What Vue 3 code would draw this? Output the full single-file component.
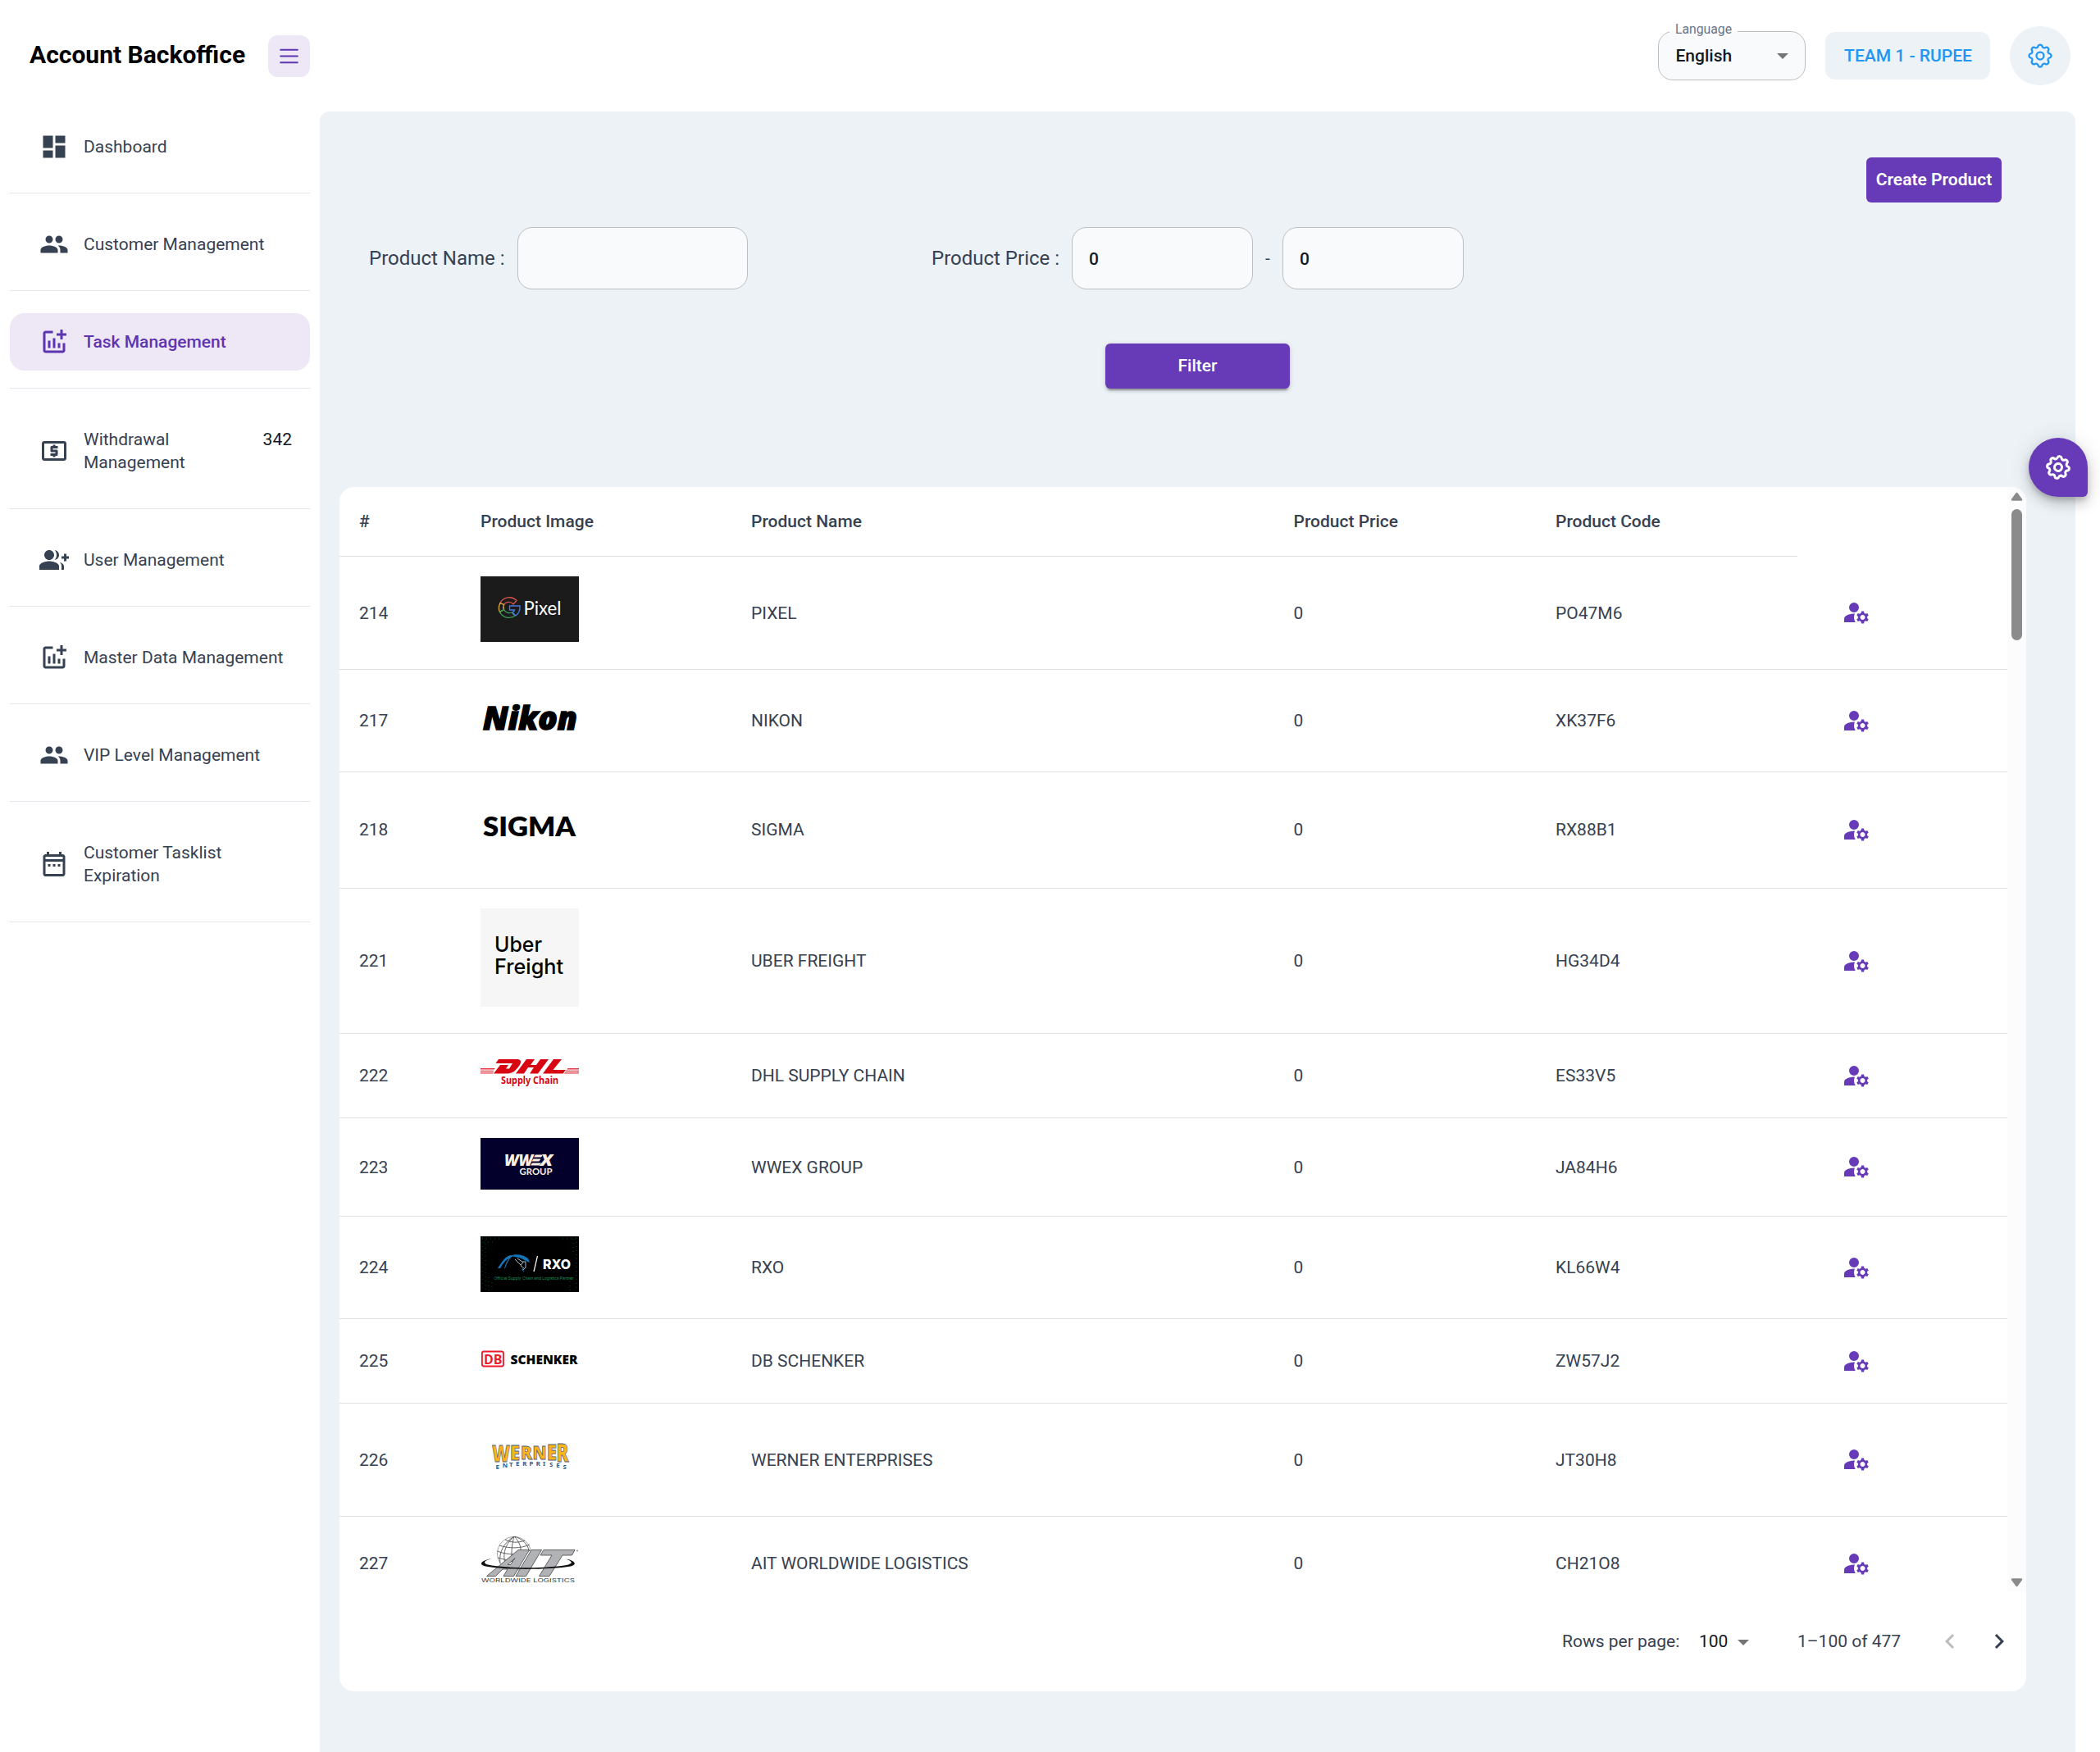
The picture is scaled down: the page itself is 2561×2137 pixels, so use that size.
<script setup>
const paths = {
  dashboard: 'M3 13h8V3H3v10zm0 8h8v-6H3v6zm10 0h8V11h-8v10zm0-18v6h8V3h-8z',
  people:
    'M16 11c1.66 0 2.99-1.34 2.99-3S17.66 5 16 5c-1.66 0-3 1.34-3 3s1.34 3 3 3zm-8 0c1.66 0 2.99-1.34 2.99-3S9.66 5 8 5C6.34 5 5 6.34 5 8s1.34 3 3 3zm0 2c-2.33 0-7 1.17-7 3.5V19h14v-2.5c0-2.33-4.67-3.5-7-3.5zm8 0c-.29 0-.62.02-.97.05 1.16.84 1.97 1.97 1.97 3.45V19h6v-2.5c0-2.33-4.67-3.5-7-3.5z',
  chart:
    'M22 5v2h-3v3h-2V7h-3V5h3V2h2v3h3zm-3 14H5V5h6V3H5c-1.1 0-2 .9-2 2v14c0 1.1.9 2 2 2h14c1.1 0 2-.9 2-2v-6h-2v6zm-4-6v4h2v-4h-2zm-4 4h2V9h-2v8zm-2 0v-6H7v6h2z',
  atm: 'M11 17h2v-1h1c.55 0 1-.45 1-1v-3c0-.55-.45-1-1-1h-3v-1h4V8h-2V7h-2v1h-1c-.55 0-1 .45-1 1v3c0 .55.45 1 1 1h3v1H9v2h2v1zm9-13H4c-1.11 0-1.99.89-1.99 2L2 18c0 1.11.89 2 2 2h16c1.11 0 2-.89 2-2V6c0-1.11-.89-2-2-2zm0 14H4V6h16v12z',
  groupAdd:
    'M22 9V7h-2v2h-2v2h2v2h2v-2h2V9zM8 12c2.21 0 4-1.79 4-4s-1.79-4-4-4-4 1.79-4 4 1.79 4 4 4zm0 1c-2.67 0-8 1.34-8 4v3h16v-3c0-2.66-5.33-4-8-4zm4.51-8.95C13.43 5.11 14 6.49 14 8s-.57 2.89-1.49 3.95C14.47 11.7 16 10.04 16 8s-1.53-3.7-3.49-3.95zm4.02 9.78C17.42 14.66 18 15.7 18 17v3h2v-3c0-1.45-1.59-2.51-3.47-3.17z',
  date: 'M19 4h-1V2h-2v2H8V2H6v2H5c-1.11 0-1.99.9-1.99 2L3 20c0 1.1.89 2 2 2h14c1.1 0 2-.9 2-2V6c0-1.1-.9-2-2-2zm0 16H5V10h14v10zm0-12H5V6h14v2zM9 14H7v-2h2v2zm4 0h-2v-2h2v2zm4 0h-2v-2h2v2z',
  manage:
    'M6 8a4 4 0 1 0 8 0a4 4 0 1 0-8 0zM10.67 13.02c-.22-.01-.44-.02-.67-.02-2.42 0-4.68.67-6.61 1.82-.88.52-1.39 1.5-1.39 2.53V20h9.26c-.79-1.13-1.26-2.51-1.26-4 0-1.07.25-2.07.67-2.98zM20.75 16c0-.22-.03-.42-.06-.63l1.14-1.01-1-1.73-1.45.49c-.32-.27-.68-.48-1.08-.63L18 11h-2l-.3 1.49c-.4.15-.76.36-1.08.63l-1.45-.49-1 1.73 1.14 1.01c-.03.21-.06.41-.06.63s.03.42.06.63l-1.14 1.01 1 1.73 1.45-.49c.32.27.68.48 1.08.63L16 21h2l.3-1.49c.4-.15.76-.36 1.08-.63l1.45.49 1-1.73-1.14-1.01c.03-.21.06-.41.06-.63zM17 18c-1.1 0-2-.9-2-2s.9-2 2-2 2 .9 2 2-.9 2-2 2z',
  gear: 'M10.325 4.317c.426-1.756 2.924-1.756 3.35 0a1.724 1.724 0 0 0 2.573 1.066c1.543-.94 3.31.826 2.37 2.37a1.724 1.724 0 0 0 1.065 2.572c1.756.426 1.756 2.924 0 3.35a1.724 1.724 0 0 0-1.066 2.573c.94 1.543-.826 3.31-2.37 2.37a1.724 1.724 0 0 0-2.572 1.065c-.426 1.756-2.924 1.756-3.35 0a1.724 1.724 0 0 0-2.573-1.066c-1.543.94-3.31-.826-2.37-2.37a1.724 1.724 0 0 0-1.065-2.572c-1.756-.426-1.756-2.924 0-3.35a1.724 1.724 0 0 0 1.066-2.573c-.94-1.543.826-3.31 2.37-2.37c1 .608 2.296.07 2.572-1.065z',
}

const menu = [
  { icon: 'dashboard', label: 'Dashboard' },
  { icon: 'people', label: 'Customer Management' },
  { icon: 'chart', label: 'Task Management', active: true },
  { icon: 'atm', label: 'Withdrawal Management', badge: '342' },
  { icon: 'groupAdd', label: 'User Management' },
  { icon: 'chart', label: 'Master Data Management' },
  { icon: 'people', label: 'VIP Level Management' },
  { icon: 'date', label: 'Customer Tasklist Expiration' },
]

const rows = [
  { id: 214, logo: 'pixel', name: 'PIXEL', code: 'PO47M6', height: 138, image: 80 },
  { id: 217, logo: 'nikon', name: 'NIKON', code: 'XK37F6', height: 125, image: 67 },
  { id: 218, logo: 'sigma', name: 'SIGMA', code: 'RX88B1', height: 141.6, image: 84 },
  { id: 221, logo: 'uber', name: 'UBER FREIGHT', code: 'HG34D4', height: 177.4, image: 120 },
  { id: 222, logo: 'dhl', name: 'DHL SUPPLY CHAIN', code: 'ES33V5', height: 103, image: 45 },
  { id: 223, logo: 'wwex', name: 'WWEX GROUP', code: 'JA84H6', height: 120.45, image: 63 },
  { id: 224, logo: 'rxo', name: 'RXO', code: 'KL66W4', height: 125.02, image: 68 },
  { id: 225, logo: 'db', name: 'DB SCHENKER', code: 'ZW57J2', height: 103, image: 45 },
  { id: 226, logo: 'werner', name: 'WERNER ENTERPRISES', code: 'JT30H8', height: 137.53, image: 80 },
  { id: 227, logo: 'ait', name: 'AIT WORLDWIDE LOGISTICS', code: 'CH21O8', height: 115, image: 60 },
]

// Letter positions of the arched second line in the Werner logo
const arch = [...'ENTERPRISES'].map((_, i) => ({ x: 18.5 + i * 8.2, y: 51.5 + (i - 5) ** 2 * 0.16 }))
const archX = arch.map((p) => p.x.toFixed(1)).join(' ')
const archY = arch.map((p) => p.y.toFixed(1)).join(' ')
</script>

<template>
  <div class="app">
    <header class="topbar">
      <div class="brand">
        <h1>Account Backoffice</h1>
        <button class="menu-btn">
          <svg width="31" height="31" viewBox="0 0 24 24" fill="none" stroke="currentColor" stroke-width="1.5" stroke-linecap="round">
            <path d="M4 6h16M4 12h16M4 18h16" />
          </svg>
        </button>
      </div>
      <div class="tools">
        <div class="lang">
          <span class="lang-label">Language</span>
          <span>English</span>
          <i class="caret"></i>
        </div>
        <div class="team">TEAM 1 - RUPEE</div>
        <div class="settings">
          <svg width="36" height="36" viewBox="0 0 24 24" fill="none" stroke="currentColor" stroke-width="1.5" stroke-linejoin="round">
            <path :d="paths.gear" /><circle cx="12" cy="12" r="3" />
          </svg>
        </div>
      </div>
    </header>

    <div class="body">
      <nav class="sidebar">
        <div v-for="item in menu" :key="item.label" class="nav-cell">
          <a class="nav-item" :class="{ active: item.active }">
            <svg width="36" height="36" viewBox="0 0 24 24" fill="currentColor"><path :d="paths[item.icon]" /></svg>
            <span class="nav-label">{{ item.label }}</span>
            <span v-if="item.badge" class="badge">{{ item.badge }}</span>
          </a>
        </div>
      </nav>

      <main class="main">
        <div class="create-row"><button class="btn create">Create Product</button></div>
        <div class="filters">
          <label class="name-label">Product Name :</label>
          <div class="field name"></div>
          <label class="price-label">Product Price :</label>
          <div class="field price">0</div>
          <span class="dash">-</span>
          <div class="field price">0</div>
        </div>
        <div class="filter-row"><button class="btn filter">Filter</button></div>

        <section class="card">
          <div class="scroll">
            <div class="table">
              <div class="tr head">
                <span>#</span><span>Product Image</span><span>Product Name</span><span>Product Price</span><span>Product Code</span>
              </div>
              <div v-for="row in rows" :key="row.id" class="tr" :style="{ height: row.height + 'px' }">
                <span>{{ row.id }}</span>
                <div class="thumb">
                  <svg width="120" :height="row.image" :viewBox="`0 0 120 ${row.image}`">
                    <g v-if="row.logo === 'pixel'">
                      <rect width="120" height="80" fill="#1b1b1b" />
                      <g fill="none" stroke-width="1.3" transform="translate(-2 -.5)">
                        <path d="M26 33A12.500 12.500 0 0 1 46 30l-4 4.500A7.200 7.200 0 0 0 30.500 35z" stroke="#d8544f" />
                        <path d="M26 33a12.500 12.500 0 0 0-.5 11l5-3a7 7 0 0 1 0-6z" stroke="#e0b33c" />
                        <path d="M25.500 44A12.500 12.500 0 0 0 44 48.500l-4-4a7.200 7.200 0 0 1-9.500-3.500z" stroke="#3c9a57" />
                        <path d="M37.500 36.500H50c.5 5-1 9-5 12l-4-4c1.500-1 2.300-2 2.500-3h-6z" stroke="#4a7be0" />
                      </g>
                      <text x="52.500" y="47" font-size="23" textLength="46" lengthAdjust="spacingAndGlyphs" fill="#fff" class="lato">Pixel</text>
                    </g>
                    <text v-else-if="row.logo === 'nikon'" x="3" y="48.500" font-size="39" textLength="115" lengthAdjust="spacingAndGlyphs" stroke="#000" stroke-width="1.500" class="open black italic">Nikon</text>
                    <text v-else-if="row.logo === 'sigma'" x="3" y="53.500" font-size="32" textLength="113" lengthAdjust="spacingAndGlyphs" class="lato black">SIGMA</text>
                    <g v-else-if="row.logo === 'uber'">
                      <rect width="120" height="120" fill="#f6f6f6" />
                      <g font-size="25.500" font-weight="500" class="inter">
                        <text x="17" y="53" textLength="58" lengthAdjust="spacingAndGlyphs">Uber</text>
                        <text x="17" y="80" textLength="84" lengthAdjust="spacingAndGlyphs">Freight</text>
                      </g>
                    </g>
                    <g v-else-if="row.logo === 'dhl'" fill="#d80613" transform="translate(0 7)">
                      <path d="M0 11h18l-1.500 1.400H0zM0 13.700h16.500l-1 1.300H0zM0 16.200h16l-1 1.200H0zM106.500 11H120v1.400h-15zM104.500 13.700H120V15h-16.500zM103 16.200h17v1.200h-18z" opacity=".8" />
                      <path fill-rule="evenodd" d="M22 0h23c5 0 5 4 2.500 7.500C44 12 41 17.400 32 17.400H16L24 7h10l-3 4.500h4l4-6.500H18.500zM56 0h10l-5 7h7l5-7h10L70 17.400H60l5-7.400h-7l-5 7.400H43zM89 0h10L88.500 13H104l-3.500 4.400H76z" />
                      <text x="25" y="30" font-size="12" textLength="70" lengthAdjust="spacingAndGlyphs" class="noto bold">Supply Chain</text>
                    </g>
                    <g v-else-if="row.logo === 'wwex'">
                      <rect width="120" height="63" fill="#03002b" />
                      <g fill="#fdeee4">
                        <text x="29" y="33.500" font-size="18.500" textLength="35" lengthAdjust="spacingAndGlyphs" class="open black italic">WW</text>
                        <path d="M67 20.500h9l-2 3h-9zM64.500 25.500h9l-2 3h-9zM63 30.500h11l-2 3H61z" />
                        <text x="73" y="33.500" font-size="18.500" textLength="15" lengthAdjust="spacingAndGlyphs" class="open black italic">X</text>
                        <text x="47.500" y="45" font-size="11.500" textLength="40" lengthAdjust="spacingAndGlyphs" class="lato bold">GROUP</text>
                      </g>
                    </g>
                    <g v-else-if="row.logo === 'rxo'">
                      <rect width="120" height="68" fill="#000" />
                      <g fill="none" stroke="#0a6a3c" stroke-width="1" stroke-dasharray="1 4" opacity=".7">
                        <path d="M2 2v64M6 4v62M10 50v16M14 56v10M2 3h24M4 7h12M113 3v18M117 2v64M109 55v11M100 3h18" />
                      </g>
                      <path d="M21 39c6-10 11-17 19-16-5 4-8 10-10 16l-1 1c1-6 3-10 6-13-5 2-8 7-11 12z" fill="#1a75b8" />
                      <path d="M35 24c8-3 17-2 23 3l2 5-5-2c-5-4-12-5-20-6z" fill="#1274b5" />
                      <path d="M42 28l7 7M45 27l6 4 4 0v7l-3 3M52 31l-3 5 4 3" fill="none" stroke="#a9bcc8" stroke-width="1" />
                      <path d="M50 40l3 4-1-5z" fill="#1274b5" />
                      <path d="M69.500 24L65 43" stroke="#fff" stroke-width="1.200" />
                      <text x="76" y="40" font-size="16" textLength="34" lengthAdjust="spacingAndGlyphs" fill="#fff" class="inter black">RXO</text>
                      <text x="16.500" y="53" font-size="5" textLength="97" lengthAdjust="spacingAndGlyphs" fill="#129b5c" class="inter">Official Supply Chain and Logistics Partner</text>
                    </g>
                    <g v-else-if="row.logo === 'db'" transform="translate(0 6)">
                      <rect x="1.900" y="9.500" width="26" height="18" rx="2" fill="#fff" stroke="#ec1b2d" stroke-width="1.900" />
                      <text x="4" y="24.500" font-size="16" textLength="22.500" lengthAdjust="spacingAndGlyphs" fill="#ec1b2d" class="open bold">DB</text>
                      <text x="36.500" y="24.500" font-size="15.500" textLength="82" lengthAdjust="spacingAndGlyphs" class="open black">SCHENKER</text>
                    </g>
                    <g v-else-if="row.logo === 'werner'">
                      <g fill="#fbb615" stroke="#52617a" stroke-width=".8" class="open black">
                        <text x="14" y="46.500" font-size="29" textLength="22" lengthAdjust="spacingAndGlyphs">W</text>
                        <text x="36" y="45" font-size="25" textLength="12" lengthAdjust="spacingAndGlyphs">E</text>
                        <text x="49" y="44" font-size="23.500" textLength="14" lengthAdjust="spacingAndGlyphs">R</text>
                        <text x="63.500" y="44" font-size="23.500" textLength="17" lengthAdjust="spacingAndGlyphs">N</text>
                        <text x="81" y="45" font-size="26" textLength="12" lengthAdjust="spacingAndGlyphs">E</text>
                        <text x="92.500" y="46.500" font-size="30" textLength="15" lengthAdjust="spacingAndGlyphs">R</text>
                      </g>
                      <text :x="archX" :y="archY" fill="#2b5790" font-size="7.800" class="noto bold">ENTERPRISES</text>
                    </g>
                    <g v-else-if="row.logo === 'ait'">
                      <g fill="none" stroke="#555" stroke-width=".9">
                        <circle cx="41" cy="21" r="20.500" stroke="#999" />
                        <path d="M23 11c12 4 26 4 37-1M20.500 18c12 5 28 5 40-1M21 26c9 3 19 4 28 2M27 34c5 1 8 1 12 0M41 0c-12 10-16 26-8 39M41 0c-3 10-4 22-2 34M41 0c7 7 9 14 8 22M41 0c10 3 16 9 18 17M30 4c8 4 16 4 24 1M24 33C22 20 28 8 41 0" />
                      </g>
                      <g fill="#b1b2b6" stroke="#555" stroke-width=".9">
                        <path fill-rule="evenodd" d="M7.500 48.500L46 16.500h13.500L40.500 48.500H28l5-8.500h-6l-8.500 8.500zM33 34.500h3.500l5.500-8z" />
                        <path d="M62 16.500h12.500L55.500 48.500H43zM77 16.500h38l-3.500 6.500h-11.500L84 48.500H71.500L87 23H73z" />
                      </g>
                      <path d="M14 27C2 29-4 34 6 36.500c26 5 80 4 104 0 8-2 6-7-6-9 8 3 9 5 3 7-26 5-72 5-98 0C2 32 5 29.500 14 27z" fill="#111" />
                      <text x="1" y="56" font-size="5.500" textLength="114" lengthAdjust="spacingAndGlyphs" fill="#333" class="inter">WORLDWIDE LOGISTICS</text>
                      <circle cx="118" cy="17.500" r="1" fill="#888" />
                    </g>
                  </svg>
                </div>
                <span>{{ row.name }}</span>
                <span>0</span>
                <span>{{ row.code }}</span>
                <svg class="act" width="36" height="36" viewBox="0 0 24 24" fill="currentColor"><path :d="paths.manage" /></svg>
              </div>
            </div>
            <div class="scrollbar">
              <svg width="15" height="12" viewBox="0 0 15 12"><path d="M7.500 2L13 9.500H2z" fill="#8b8b8b" stroke="#8b8b8b" stroke-width="2.500" stroke-linejoin="round" /></svg>
              <div class="bar"></div>
              <svg width="15" height="12" viewBox="0 0 15 12"><path d="M7.500 10L13 2.500H2z" fill="#8b8b8b" stroke="#8b8b8b" stroke-width="2.500" stroke-linejoin="round" /></svg>
            </div>
          </div>
          <footer class="pager">
            <span class="rpp">Rows per page:</span>
            <span class="count">100</span>
            <i class="caret"></i>
            <span class="range">1–100 of 477</span>
            <svg class="prev" width="36" height="36" viewBox="0 0 24 24" fill="#bdbdbd"><path d="M15.410 16.590 10.830 12l4.580-4.590L14 6l-6 6 6 6 1.410-1.410z" /></svg>
            <svg class="next" width="36" height="36" viewBox="0 0 24 24" fill="#364152"><path d="M8.590 16.590 13.170 12 8.590 7.410 10 6l6 6-6 6-1.410-1.410z" /></svg>
          </footer>
        </section>
      </main>
    </div>

    <button class="fab">
      <svg width="36" height="36" viewBox="0 0 24 24" fill="none" stroke="currentColor" stroke-width="2" stroke-linejoin="round">
        <path :d="paths.gear" /><circle cx="12" cy="12" r="3" />
      </svg>
    </button>
  </div>
</template>

<style>
body {
  margin: 0;
  background: #fff;
}
</style>

<style scoped>
.app {
  position: relative;
  box-sizing: border-box;
  width: 2561px;
  height: 2137px;
  overflow: hidden;
  display: flex;
  flex-direction: column;
  font-family: Roboto, 'Liberation Sans', sans-serif;
  font-size: 21px;
  line-height: 28px;
  color: #364152;
}
.app * {
  box-sizing: border-box;
}
button {
  border: 0;
  padding: 0;
  font: inherit;
}
.topbar {
  height: 136px;
  display: flex;
  justify-content: space-between;
  align-items: center;
  padding: 0 36px;
}
.brand {
  width: 342px;
  display: flex;
  justify-content: space-between;
  align-items: center;
}
h1 {
  margin: 0 0 2px;
  font-size: 30px;
  font-weight: 700;
  line-height: 36px;
  color: #000;
  white-space: nowrap;
}
.menu-btn {
  width: 51px;
  height: 51px;
  border-radius: 12px;
  background: #ede7f6;
  color: #5e35b1;
  display: flex;
  align-items: center;
  justify-content: center;
}
.tools {
  display: flex;
  align-items: center;
}
.lang {
  position: relative;
  width: 180px;
  height: 60px;
  border: 1px solid #bcbec0;
  border-radius: 18px;
  background: #f8fafc;
  display: flex;
  align-items: center;
  justify-content: space-between;
  padding: 0 20px 0 20.500px;
  color: #121926;
  font-weight: 500;
  margin-right: 24px;
}
.lang-label {
  position: absolute;
  left: 13px;
  top: -13px;
  padding: 0 7px;
  font-size: 15.750px;
  line-height: 20px;
  font-weight: 400;
  color: #697586;
  background: linear-gradient(#fff 60%, #f8fafc 60%);
}
.caret {
  width: 0;
  height: 0;
  border: 7.500px solid transparent;
  border-top-color: #757575;
  border-bottom-width: 0;
}
.team {
  width: 201px;
  height: 58px;
  border-radius: 12px;
  background: #ecf2f6;
  color: #2196f3;
  font-weight: 500;
  display: flex;
  align-items: center;
  justify-content: center;
  margin-right: 24px;
  padding-left: 1px;
}
.settings {
  width: 74px;
  height: 72px;
  border-radius: 37px;
  background: #ecf2f6;
  color: #2196f3;
  display: flex;
  align-items: center;
  justify-content: center;
}
.body {
  flex: 1;
  display: flex;
  min-height: 0;
}
.sidebar {
  width: 390px;
  padding: 0 12px;
}
.nav-cell {
  padding: 27px 0 21px;
  border-bottom: 1px solid #e3e8ef;
}
.nav-cell:first-child {
  padding-top: 8px;
}
.nav-item {
  display: flex;
  align-items: center;
  padding: 21px 22px 21px 36px;
  border-radius: 18px;
}
.nav-item svg {
  margin: -4px 18px -4px 0;
  flex: none;
}
.nav-label {
  flex: 1;
  padding-right: 20px;
  margin-right: -20px;
}
.nav-item .badge {
  align-self: flex-start;
  color: #121926;
}
.active {
  background: #ede7f6;
  color: #5e35b1;
  font-weight: 500;
}
.main {
  width: 2141px;
  padding: 56px 60px 0 24px;
  border-radius: 12px 12px 0 0;
  background: #ecf2f6;
}
.btn {
  height: 55px;
  padding-bottom: 2px;
  border-radius: 6px;
  background: #673ab7;
  color: #fff;
  font-weight: 500;
}
.create-row {
  display: flex;
  justify-content: flex-end;
  padding-right: 30px;
}
.create {
  width: 165px;
  font-weight: 600;
}
.filters {
  display: flex;
  align-items: center;
  margin-top: 30px;
  padding-left: 36px;
  font-size: 24px;
}
.name-label {
  width: 181px;
}
.price-label {
  width: 171px;
}
.field {
  height: 76px;
  border: 1px solid #bcbec0;
  border-radius: 18px;
  background: #f8fafc;
  color: #121926;
  font-size: 21px;
  font-weight: 500;
  padding: 24px 20px;
}
.field.name {
  width: 281px;
  margin-right: 224px;
}
.field.price {
  width: 221px;
}
.dash {
  width: 36px;
  padding-left: 15px;
  font-size: 21px;
}
.filter-row {
  display: flex;
  justify-content: center;
  margin-top: 66px;
  padding-left: 36px;
}
.filter {
  width: 225px;
  box-shadow: 0 4.500px 1.500px -3px rgba(0, 0, 0, 0.2), 0 3px 3px rgba(0, 0, 0, 0.14), 0 1.500px 7.500px rgba(0, 0, 0, 0.12);
}
.card {
  width: 2057px;
  height: 1469px;
  margin-top: 120px;
  border-radius: 18px;
  background: #fff;
  overflow: hidden;
}
.scroll {
  height: 1347px;
  display: flex;
  overflow: hidden;
}
.table {
  width: 2034px;
}
.tr {
  display: grid;
  grid-template-columns: 148px 330px 661.500px 319.500px 350px 1fr;
  align-items: center;
  padding-left: 24px;
  border-bottom: 1px solid #e0e0e0;
}
.head {
  width: 1778px;
  height: 85px;
  font-weight: 500;
}
.thumb {
  align-self: start;
  padding-top: 24px;
}
.thumb svg {
  display: block;
}
.act {
  color: #673ab7;
  margin: -0.500px 0 0 -1px;
}
.lato {
  font-family: Lato, sans-serif;
}
.open {
  font-family: 'Open Sans', sans-serif;
}
.inter {
  font-family: Inter, sans-serif;
}
.noto {
  font-family: 'Noto Sans', sans-serif;
}
.bold {
  font-weight: 700;
}
.black {
  font-weight: 800;
}
.italic {
  font-style: italic;
}
.scrollbar {
  width: 23px;
  background: #fcfcfc;
  display: flex;
  flex-direction: column;
  align-items: center;
  padding: 6px 0 5px;
}
.bar {
  width: 13px;
  height: 160px;
  margin: 9px 0 auto;
  border-radius: 7px;
  background: #8b8b8b;
}
.pager {
  height: 122px;
  display: flex;
  align-items: center;
  padding-left: 1491px;
}
.rpp {
  width: 167px;
}
.count {
  width: 47px;
  color: #121926;
}
.pager .caret {
  margin-top: 3px;
}
.range {
  width: 167.500px;
  margin-left: 59px;
}
.prev {
  margin-right: 24px;
}
.fab {
  position: absolute;
  left: 2474px;
  top: 534px;
  width: 72px;
  height: 72px;
  border-radius: 50% 50% 6px 50%;
  background: #673ab7;
  color: #fff;
  display: flex;
  align-items: center;
  justify-content: center;
  box-shadow: 0 4.500px 7.500px -1.500px rgba(0, 0, 0, 0.2), 0 9px 15px rgba(0, 0, 0, 0.14), 0 1.500px 27px rgba(0, 0, 0, 0.12);
}
.fab svg {
  transform: rotate(8deg);
}
</style>
